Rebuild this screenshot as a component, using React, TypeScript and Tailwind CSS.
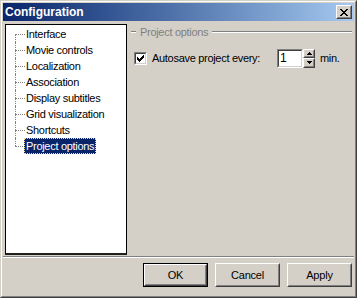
import React from 'react';

const font = { fontFamily: '"Liberation Sans", Arial, sans-serif' };

const items = [
  'Interface',
  'Movie controls',
  'Localization',
  'Association',
  'Display subtitles',
  'Grid visualization',
  'Shortcuts',
  'Project options',
];

// raised 3D box used by buttons
const Raised: React.FC<{ className?: string; children?: React.ReactNode }> = ({ className = '', children }) => (
  <div className={`border border-white border-r-[#404040] border-b-[#404040] ${className}`}>
    <div className="w-full h-full border border-[#d4d0c8] border-r-[#808080] border-b-[#808080] flex items-center justify-center">
      {children}
    </div>
  </div>
);

const Button: React.FC<{ label: string; isDefault?: boolean }> = ({ label, isDefault }) => (
  <div className={`w-[65px] h-[24px] ${isDefault ? 'border border-black' : ''}`}>
    <Raised className="w-full h-full">
      <span className="text-[11px] text-black tracking-[-0.2px]">{label}</span>
    </Raised>
  </div>
);

const TreeRow: React.FC<{ label: string; first: boolean; last: boolean; selected: boolean }> = ({ label, first, last, selected }) => (
  <div className="flex h-4 items-stretch">
    <div className="ml-[9px] w-[10px] flex flex-col">
      <div className={`h-[8px] ${first ? '' : 'border-l border-dotted border-[#808080]'}`} />
      <div className={`h-[8px] border-t border-dotted border-[#808080] ${last ? '' : 'border-l'}`} />
    </div>
    <div className="ml-[-1px] flex items-center">
      {selected ? (
        <span className="h-4 px-[2px] flex items-center bg-[#0a246a] text-white outline outline-1 outline-dotted outline-[#f5db95] -outline-offset-1">
          {label}
        </span>
      ) : (
        <span className="px-[2px] text-black">{label}</span>
      )}
    </div>
  </div>
);

export default function App() {
  return (
    <div style={font} className="w-[357px] h-[298px] bg-[#d4d0c8] border border-[#d4d0c8] border-r-[#404040] border-b-[#404040] select-none">
      <div className="h-full border border-white border-r-[#808080] border-b-[#808080] p-px flex flex-col">
        {/* Title bar */}
        <div className="h-[18px] bg-gradient-to-r from-[#0a246a] to-[#a6caf0] flex items-center justify-between pl-[2px] pr-[2px]">
          <span className="text-white font-bold text-[12px] leading-none">Configuration</span>
          <Raised className="w-4 h-[14px] bg-[#d4d0c8]">
            <svg width="8" height="7" viewBox="0 0 8 7" shapeRendering="crispEdges">
              <path d="M0 0h2v1H0zM6 0h2v1H6zM1 1h2v1H1zM5 1h2v1H5zM2 2h4v1H2zM3 3h2v1H3zM2 4h4v1H2zM1 5h2v1H1zM5 5h2v1H5zM0 6h2v1H0zM6 6h2v1H6z" fill="#000" />
            </svg>
          </Raised>
        </div>

        {/* Body */}
        <div className="flex mt-[3px] ml-[2px]">
          <div className="w-[122px] h-[231px] bg-white border border-black border-b-2 border-b-[#202020] text-[11px] tracking-[-0.3px] pt-px">
            {items.map((it, i) => (
              <TreeRow key={it} label={it} first={i === 0} last={i === items.length - 1} selected={i === items.length - 1} />
            ))}
          </div>

          <div className="flex-1 flex flex-col text-[11px] tracking-[-0.3px]">
            {/* group title */}
            <div className="flex items-center mt-[1px] h-[14px] ml-[4px] mr-[2px]">
              <div className="w-[5px] border-t border-[#808080] border-b border-b-white" />
              <span className="px-[4px] text-[#808080]">Project options</span>
              <div className="flex-1 border-t border-[#808080] border-b border-b-white" />
            </div>

            <div className="flex items-center h-[20px] mt-[9px] ml-[7px]">
              <div className="w-[13px] h-[13px] border border-[#808080] border-r-white border-b-white">
                <div className="w-full h-full bg-white border border-[#404040] border-r-[#d4d0c8] border-b-[#d4d0c8] flex items-center justify-center">
                  <svg width="7" height="7" viewBox="0 0 7 7" shapeRendering="crispEdges">
                    <path d="M6 0h1v3H6zM5 1h1v3H5zM4 2h1v3H4zM3 3h1v3H3zM2 4h1v3H2zM1 3h1v3H1zM0 2h1v3H0z" fill="#000" />
                  </svg>
                </div>
              </div>
              <span className="ml-[5px] w-[125px] text-black">Autosave project every:</span>
              <div className="flex h-[19px]">
                <div className="w-[26px] h-full border border-[#808080] border-r-white border-b-white">
                  <div className="w-full h-full bg-white border border-[#404040] border-r-[#d4d0c8] border-b-[#d4d0c8] pl-[1px] flex items-center text-black text-[12px]">
                    1
                  </div>
                </div>
                <div className="w-[12px] h-full flex flex-col">
                  <Raised className="h-[9px] w-full bg-[#d4d0c8]">
                    <svg width="5" height="3" viewBox="0 0 5 3" shapeRendering="crispEdges">
                      <path d="M2 0h1v1H2zM1 1h3v1H1zM0 2h5v1H0z" fill="#000" />
                    </svg>
                  </Raised>
                  <Raised className="h-[10px] w-full bg-[#d4d0c8]">
                    <svg width="5" height="3" viewBox="0 0 5 3" shapeRendering="crispEdges">
                      <path d="M0 0h5v1H0zM1 1h3v1H1zM2 2h1v1H2z" fill="#000" />
                    </svg>
                  </Raised>
                </div>
              </div>
              <span className="ml-[5px] text-black">min.</span>
            </div>
          </div>
        </div>

        {/* separator */}
        <div className="mt-px border-t border-[#808080] border-b border-b-white" />

        {/* buttons */}
        <div className="flex justify-end gap-[7px] mt-[5px] pr-[2px]">
          <Button label="OK" isDefault />
          <Button label="Cancel" />
          <Button label="Apply" />
        </div>
      </div>
    </div>
  );
}
